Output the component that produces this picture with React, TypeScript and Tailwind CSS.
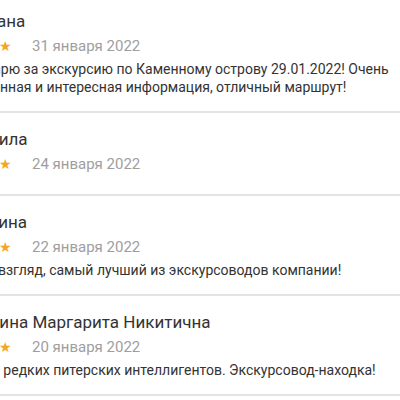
const reviews = [
  {
    name: "Светлана",
    date: "31 января 2022",
    text: "Благодарю за экскурсию по Каменному острову 29.01.2022! Очень насыщенная и интересная информация, отличный маршрут!",
  },
  { name: "Людмила", date: "24 января 2022", text: "" },
  {
    name: "Антонина",
    date: "22 января 2022",
    text: "На мой взгляд, самый лучший из экскурсоводов компании!",
  },
  {
    name: "Воронина Маргарита Никитична",
    date: "20 января 2022",
    text: "Один из редких питерских интеллигентов. Экскурсовод-находка!",
  },
];

function Stars() {
  return (
    <div className="flex text-[14px] leading-5 text-[#f5a623]">
      {[0, 1, 2, 3, 4].map((i) => (
        <span key={i}>★</span>
      ))}
    </div>
  );
}

export default function App() {
  return (
    <div className="w-[400px] h-[400px] overflow-hidden bg-white font-['Roboto',sans-serif]">
      <div className="w-[480px] -ml-[53px] -mt-[5px]">
        {reviews.map((r) => (
          <div key={r.date} className="pt-[15px] pb-[15px] border-b-2 border-[#e4e4e4]">
            <div className="pl-[3px] text-[17px] leading-[22px] text-[#333333]">{r.name}</div>
            <div className="mt-1 flex items-center h-5">
              <Stars />
              <span className="ml-[20px] text-[15px] leading-5 text-[#9e9e9e]">{r.date}</span>
            </div>
            {r.text ? (
              <p className="mt-1 text-[14px] leading-[18px] text-[#333333]">{r.text}</p>
            ) : (
              <p className="mt-[5px]" />
            )}
          </div>
        ))}
      </div>
    </div>
  );
}
